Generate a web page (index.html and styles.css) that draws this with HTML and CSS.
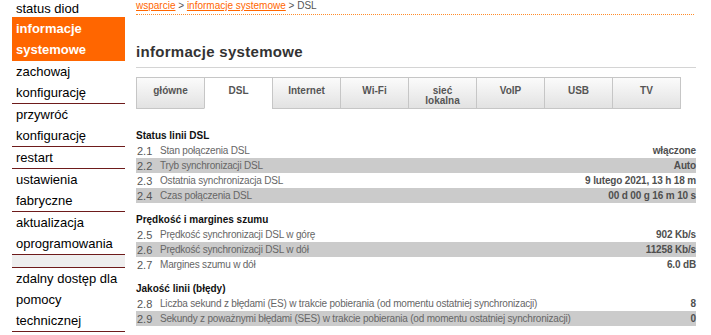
FILE: index.html
```html
<!DOCTYPE html>
<html>

<head>
    <title>informacje systemowe - DSL</title>

    <link rel="stylesheet" href="styles.css">
</head>

<body>

    <div class="page">

        <ul class="sidebar">
            <li class="first"><a href="#">status diod</a></li>
            <li class="active"><a href="#">informacje systemowe</a></li>
            <li><a href="#">zachowaj konfigurację</a></li>
            <li><a href="#">przywróć konfigurację</a></li>
            <li><a href="#">restart</a></li>
            <li><a href="#">ustawienia fabryczne</a></li>
            <li><a href="#">aktualizacja oprogramowania</a></li>
            <li class="spacer"></li>
            <li><a href="#">zdalny dostęp dla pomocy technicznej</a></li>
        </ul>

        <main class="main">

            <div class="breadcrumb">
                <a href="#">wsparcie</a> &gt; <a href="#">informacje systemowe</a> &gt; DSL
            </div>

            <h1 class="page-title">informacje systemowe</h1>

            <ul class="tabs">
                <li>główne</li>
                <li class="active">DSL</li>
                <li>Internet</li>
                <li>Wi-Fi</li>
                <li>sieć<br>lokalna</li>
                <li>VoIP</li>
                <li>USB</li>
                <li>TV</li>
            </ul>

            <div class="section">
                <h2 class="section-title">Status linii DSL</h2>
                <div class="row"><span class="num">2.1</span><span class="label">Stan połączenia DSL</span><span class="value">włączone</span></div>
                <div class="row"><span class="num">2.2</span><span class="label">Tryb synchronizacji DSL</span><span class="value">Auto</span></div>
                <div class="row"><span class="num">2.3</span><span class="label">Ostatnia synchronizacja DSL</span><span class="value">9 lutego 2021, 13 h 18 m</span></div>
                <div class="row"><span class="num">2.4</span><span class="label">Czas połączenia DSL</span><span class="value">00 d 00 g 16 m 10 s</span></div>
            </div>

            <div class="section">
                <h2 class="section-title">Prędkość i margines szumu</h2>
                <div class="row"><span class="num">2.5</span><span class="label">Prędkość synchronizacji DSL w górę</span><span class="value">902 Kb/s</span></div>
                <div class="row"><span class="num">2.6</span><span class="label">Prędkość synchronizacji DSL w dół</span><span class="value">11258 Kb/s</span></div>
                <div class="row"><span class="num">2.7</span><span class="label">Margines szumu w dół</span><span class="value">6.0 dB</span></div>
            </div>

            <div class="section">
                <h2 class="section-title">Jakość linii (błędy)</h2>
                <div class="row"><span class="num">2.8</span><span class="label">Liczba sekund z błędami (ES) w trakcie pobierania (od momentu ostatniej synchronizacji)</span><span class="value">8</span></div>
                <div class="row"><span class="num">2.9</span><span class="label">Sekundy z poważnymi błędami (SES) w trakcie pobierania (od momentu ostatniej synchronizacji)</span><span class="value">0</span></div>
            </div>

        </main>

    </div>

</body>

</html>
```

FILE: styles.css
```css
* {
    margin: 0;
    padding: 0;
    box-sizing: border-box;
}

body {
    font-family: "Liberation Sans", Arial, sans-serif;
    font-size: 10px;
    color: #333;
    background-color: #fff;
}

.page {
    display: flex;
    align-items: flex-start;
}

/* left menu */

.sidebar {
    flex: none;
    width: 113px;
    margin-left: 12px;
    list-style-type: none;
}

.sidebar li {
    border-bottom: 1px solid #6e1b1b;
}

.sidebar li.first,
.sidebar li.active {
    border-bottom-color: #ff6600;
}

.sidebar a {
    display: block;
    padding-left: 4px;
    font-size: 13px;
    line-height: 21px;
    color: #000;
    text-decoration: none;
}

.sidebar li.first a {
    line-height: 17px;
}

.sidebar li.active {
    background-color: #ff6600;
}

.sidebar li.active a {
    color: #fff;
    font-weight: bold;
}

.sidebar li.spacer {
    height: 13px;
    background-color: #eee;
}

/* content */

.main {
    width: 560px;
    margin-left: 11px;
}

.breadcrumb {
    width: 558px;
    line-height: 11px;
    padding-bottom: 3px;
    color: #555;
    border-bottom: 1px dotted #ff8c2a;
}

.breadcrumb a {
    color: #ff6600;
    text-decoration: underline;
}

.page-title {
    margin-top: 28px;
    padding-bottom: 6px;
    font-size: 15px;
    line-height: 18px;
    letter-spacing: 0.3px;
    color: #333;
    border-bottom: 1px solid #d4d4d4;
}

.tabs {
    display: flex;
    margin-top: 9px;
    margin-bottom: 19px;
    list-style-type: none;
}

.tabs li {
    width: 68px;
    height: 32px;
    padding-top: 8px;
    border: 1px solid #c6c6c6;
    border-right: none;
    background: linear-gradient(#fbfbfb, #e2e2e2);
    text-align: center;
    font-weight: bold;
    font-size: 10px;
    line-height: 10px;
    color: #555;
}

.tabs li:last-child {
    width: 69px;
    border-right: 1px solid #c6c6c6;
}

.tabs li.active {
    background: #fff;
    border-bottom-color: #fff;
}

.section {
    margin-top: 9px;
}

.section:first-of-type {
    margin-top: 0;
}

.section-title {
    font-size: 10px;
    line-height: 15px;
    font-weight: bold;
    color: #111;
}

.row {
    display: flex;
    align-items: center;
    height: 15px;
    color: #666;
}

.row:nth-of-type(even) {
    background-color: #cbcbcb;
}

.num {
    flex: none;
    width: 24px;
    padding-left: 1px;
    font-size: 11px;
    color: #555;
}

.label {
    flex: 1;
    white-space: nowrap;
    letter-spacing: -0.2px;
}

.value {
    font-weight: bold;
    letter-spacing: -0.15px;
    color: #4f4f4f;
    text-align: right;
}
```
